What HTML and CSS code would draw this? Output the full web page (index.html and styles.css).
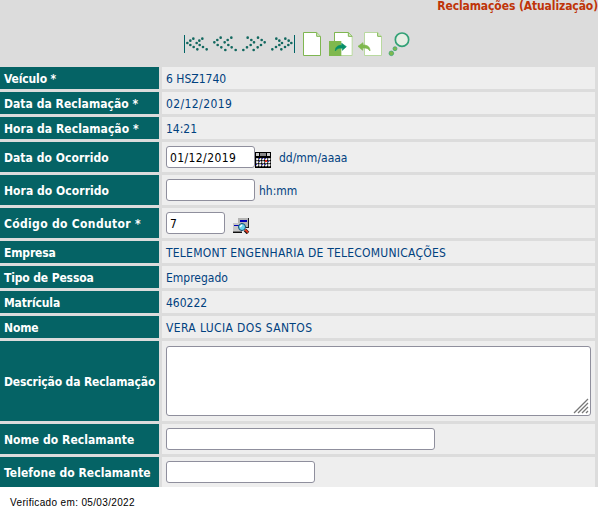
FILE: index.html
```html
<!DOCTYPE html>
<html lang="pt-BR">
<head>
<meta charset="utf-8">
<title>Reclamações</title>
<link rel="stylesheet" href="styles.css">
</head>
<body>
<main class="panel">
<h1 class="title">Reclamações (Atualização)</h1>
<nav class="toolbar">
<svg class="nav" width="27" height="40" viewBox="9 0 81 120"><path class="bar" d="M13.5 30V84"/><path class="dots" d="M40 41h0M31 47h0M22 54h0M31 60h0M41 66h0M52 73h0M67 41h0M58 47h0M50 54h0M59 60h0M69 66h0M80 73h0"/></svg>
<svg class="nav" width="29" height="40" viewBox="90 0 87 120"><path class="dots" d="M122 38h0M112 45h0M103 52h0M113 60h0M124 67h0M136 75h0M154 38h0M143 45h0M134 52h0M145 60h0M155 67h0M167 75h0"/></svg>
<svg class="nav" width="29" height="40" viewBox="177 0 87 120"><path class="dots" d="M203 38h0M214 45h0M222 52h0M212 60h0M201 67h0M190 75h0M234 38h0M245 45h0M254 52h0M243 60h0M233 67h0M221 75h0"/></svg>
<svg class="nav" width="29" height="40" viewBox="264 0 87 120"><path class="dots" d="M289 41h0M298 47h0M306 54h0M298 60h0M288 66h0M277 73h0M316 41h0M326 47h0M334 54h0M325 60h0M315 66h0M304 73h0"/><path class="bar" d="M343.5 30V84"/></svg>
<svg width="28" height="40" viewBox="6 0 84 120"><path d="M25.500 22.500H65L76.500 34V91.500H25.500Z" fill="#fff" stroke="#7fb651" stroke-width="3"/><path d="M65 23V34H76" fill="#d4e7c4" stroke="#7fb651" stroke-width="3"/></svg>
<svg width="30" height="40" viewBox="90 0 90 120"><path d="M118.500 22.500H160L171.500 34V91.500H118.500Z" fill="#fff" stroke="#b9d9a0" stroke-width="3"/><path d="M118.500 48V22.500H160L171.500 34" fill="none" stroke="#7fb651" stroke-width="3"/><path d="M160 23V34H171" fill="#d4e7c4" stroke="#7fb651" stroke-width="3"/><path d="M102 48H139V93H102Z" fill="#7fb84e"/><path d="M121 78C121 65 129 61 140 61V55L154 65L142 76V70C132 68 126 70 121 78Z" fill="#078f68" stroke="#078f68" stroke-width="2"/></svg>
<svg width="30" height="40" viewBox="180 0 90 120"><path d="M208.500 22.500H248L259.500 34V91.500H208.500Z" fill="#fff" stroke="#b9d9a0" stroke-width="3"/><path d="M248 23V34H259" fill="#d4e7c4" stroke="#7fb651" stroke-width="3"/><path d="M225 78C225 64 216 60 204 60V53L189 64L203 76V69C214 68 220 70 225 78Z" fill="#7fb84e" stroke="#7fb84e" stroke-width="2"/></svg>
<svg width="27" height="40" viewBox="270 0 81 120"><circle cx="321" cy="44" r="20" fill="#e6eee4" stroke="#32a176" stroke-width="5"/><circle cx="300" cy="71" r="6" fill="#7fb84e" stroke="#32a176" stroke-width="2"/><circle cx="289" cy="85" r="7" fill="#7fb84e" stroke="#32a176" stroke-width="2"/></svg>
</nav>
<form class="form">
<div class="label">Veículo *</div><div class="value">6 HSZ1740</div>
<div class="label loose">Data da Reclamação *</div><div class="value date">02/12/2019</div>
<div class="label loose">Hora da Reclamação *</div><div class="value">14:21</div>
<div class="label loose">Data do Ocorrido</div>
<div class="value"><input class="field time date" type="text" value="01/12/2019"><svg class="calendar" width="16" height="16" viewBox="0 0 16 16" shape-rendering="crispEdges"><path d="M0 0H16V16H0Z"/><path d="M1 1H4V4H1ZM12 1H15V4H12Z" fill="#ccc"/><path d="M5 1H11V4H5Z" fill="#888"/><path d="M1 6h2v2H1zM4 6h2v2H4zM7 6h2v2H7zM10 6h2v2h-2zM13 6h2v2h-2zM1 9h2v2H1zM4 9h2v2H4zM7 9h2v2H7zM10 9h2v2h-2zM13 9h2v2h-2zM1 12h2v2H1zM4 12h2v2H4zM7 12h2v2H7zM10 12h2v2h-2zM13 12h2v2h-2z" fill="#fff" stroke="#aaa" stroke-width=".5"/><path d="M4 6h1v1H4ZM7 6h1v1H7ZM10 6h1v1h-1ZM4 9h1v1H4ZM7 12h1v1H7ZM1 12h1v1H1ZM13 9h1v1h-1ZM10 12h1v1h-1Z" fill="#2020d0"/><path d="M10 8h2v2h-2Z" fill="#e52b16"/></svg><span class="hint">dd/mm/aaaa</span></div>
<div class="label loose">Hora do Ocorrido</div><div class="value"><input class="field time" type="text"><span class="hint-near">hh:mm</span></div>
<div class="label looser">Código do Condutor *</div>
<div class="value"><input class="field code" type="text" value="7"><svg class="lookup" width="17" height="16" viewBox="0 0 17 16"><g shape-rendering="crispEdges"><path d="M5 0H16V10H5Z" fill="#222"/><path d="M5 0H15V9H5Z" fill="#b4b4b4"/><path d="M7 2h7v2H7Z" fill="#0000b8"/><path d="M0 5H9V14H0Z" fill="#777"/><path d="M0 5H8V13H0Z" fill="#c7c7c7"/><path d="M1 7h5v1H1Z" fill="#0000b8"/><path d="M0 14h9v1H0Z" fill="#111"/></g><path d="M12 12L15 15" stroke="#111" stroke-width="3.500"/><path d="M12 11.500L15 14.500" stroke="#e23a20" stroke-width="2"/><circle cx="9" cy="9" r="3.500" fill="#68d4ee" stroke="#174e72"/><path d="M7 9L9 7" stroke="#fff" stroke-width="1.500"/></svg></div>
<div class="label">Empresa</div><div class="value company">TELEMONT ENGENHARIA DE TELECOMUNICAÇÕES</div>
<div class="label">Tipo de Pessoa</div><div class="value">Empregado</div>
<div class="label">Matrícula</div><div class="value">460222</div>
<div class="label">Nome</div><div class="value person">VERA LUCIA DOS SANTOS</div>
<div class="label">Descrição da Reclamação</div>
<div class="value"><div class="textarea-wrap"><textarea class="area"></textarea><svg class="grip" width="16" height="16" viewBox="0 0 16 16"><path d="M1 15L15 1M5 15L15 5M9 15L15 9M13 15L15 13"/></svg></div></div>
<div class="label loose">Nome do Reclamante</div><div class="value"><input class="field name" type="text"></div>
<div class="label loose">Telefone do Reclamante</div><div class="value"><input class="field phone" type="text"></div>
</form>
</main>
<footer class="footer">Verificado em: 05/03/2022</footer>
</body>
</html>
```

FILE: styles.css
```css
* { box-sizing: border-box; }
body { margin: 0; overflow: hidden; background: #fff; }
.panel {
  height: 487px;
  background: #dcdcdc;
  font: 12px/16px "DejaVu Sans Condensed", "DejaVu Sans", sans-serif;
  font-stretch: condensed;
}
.title {
  height: 25px;
  margin: 0;
  line-height: 12px;
  font-size: 12px;
  letter-spacing: -0.1px;
  text-align: right;
  color: #bf3408;
}
.toolbar { display: flex; height: 42px; padding-left: 183px; }
.toolbar svg { flex: none; }
.dots { fill: none; stroke: #12685f; stroke-width: 8; stroke-linecap: round; }
.bar { stroke: #006465; stroke-width: 3; }
.form {
  display: grid;
  grid-template-columns: 159px 433px;
  grid-template-rows: 22px 22px 22px 30px 30px 30px 22px 22px 22px 22px 80px 30px 30px;
  gap: 3px;
}
.label, .value { display: flex; align-items: center; padding: 1px 0 0 4px; white-space: nowrap; }
.label { background: #056365; color: #fff; font-weight: bold; letter-spacing: -0.14px; }
.label.loose { letter-spacing: 0.05px; }
.label.looser { letter-spacing: 0.33px; }
.value { background: #eee; color: #00417f; }
.value:has(.field, .area) { padding-top: 0; }
.value.company { letter-spacing: 0.23px; }
.value.person { letter-spacing: 0.38px; }
.field, .area {
  margin: 0;
  border: 1px solid #8f8f9d;
  border-radius: 3px;
  background: #fff;
  color: #000;
  font: inherit;
  outline: none;
}
.field { height: 22px; padding: 2px 3px 1px; }
.date { letter-spacing: 0.4px; }
.time { width: 89px; }
.code { width: 59px; }
.name { width: 269px; }
.phone { width: 149px; }
.calendar { margin-top: 5px; }
.hint { margin: 1px 0 0 8px; }
.hint-near { margin: 1px 0 0 4px; }
.lookup { margin: 6px 0 0 8px; }
.textarea-wrap { position: relative; width: 425px; height: 70px; }
.area { display: block; width: 100%; height: 100%; resize: none; }
.grip { position: absolute; right: 2px; bottom: 2px; fill: none; stroke: #777; stroke-width: 1.3; }
.footer {
  padding: 10px;
  font: 10px/12px "Liberation Sans", sans-serif;
  letter-spacing: 0.35px;
  color: #000;
}
```
